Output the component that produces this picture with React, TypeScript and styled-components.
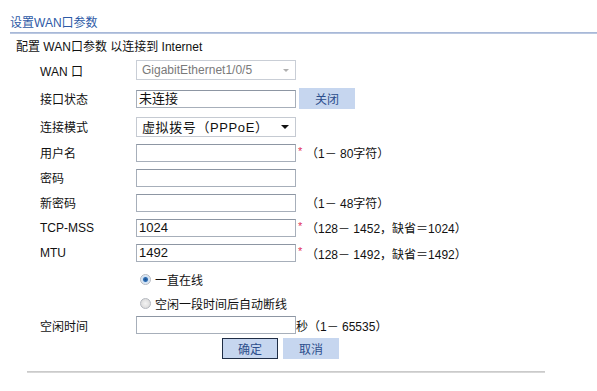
import React from "react";
import styled, { createGlobalStyle } from "styled-components";

const Global = createGlobalStyle`
  html, body { margin: 0; padding: 0; background: #fff; }
  body { font-family: "Liberation Sans", Arial, "Noto Sans CJK SC", sans-serif; font-size: 12px; color: #111; }
`;

const Page = styled.div`
  width: 597px;
  height: 391px;
  overflow: hidden;
  box-sizing: border-box;
  padding-top: 17px;
`;

const Title = styled.div`
  padding-left: 10px;
  height: 15px;
  line-height: 12px;
  color: #2d5aa6;
  font-size: 12px;
`;

const HeaderRule = styled.div`
  margin-left: 10px;
  height: 2px;
  background: linear-gradient(#9fb1d3, #c3cfe5);
`;

const Intro = styled.div`
  padding-left: 16px;
  margin-top: 5px;
  height: 16px;
  line-height: 16px;
  color: #111;
`;

const Form = styled.div`
  display: flex;
  flex-direction: column;
  margin-top: 1px;
`;

const Row = styled.div<{ $h: number }>`
  display: flex;
  align-items: center;
  height: ${(p) => p.$h}px;
  padding-left: 40px;
`;

const Label = styled.div`
  width: 96px;
  flex: none;
  color: #111;
`;

const Indent = styled.div`
  width: 96px;
  flex: none;
`;

const Input = styled.div`
  box-sizing: border-box;
  width: 160px;
  height: 18px;
  border: 1px solid #a7afba;
  border-top-color: #8d96a3;
  background: #fff;
  padding-left: 2px;
  line-height: 16px;
  font-size: 13px;
  color: #111;
  flex: none;
`;

const Select = styled.div<{ $disabled?: boolean }>`
  box-sizing: border-box;
  width: 160px;
  height: 20px;
  border: 1px solid ${(p) => (p.$disabled ? "#c9ced6" : "#c5cad2")};
  background: #fff;
  display: flex;
  align-items: center;
  justify-content: space-between;
  padding: 0 4px 0 5px;
  color: ${(p) => (p.$disabled ? "#7a7a7a" : "#111")};
  font-size: ${(p) => (p.$disabled ? "12px" : "13px")};
  letter-spacing: ${(p) => (p.$disabled ? "0" : "0.6px")};
  flex: none;
`;

const Arrow = styled.span<{ $disabled?: boolean }>`
  width: 0;
  height: 0;
  border-left: ${(p) => (p.$disabled ? 3 : 4)}px solid transparent;
  border-right: ${(p) => (p.$disabled ? 3 : 4)}px solid transparent;
  border-top: ${(p) => (p.$disabled ? 3 : 4)}px solid ${(p) => (p.$disabled ? "#b0b0b0" : "#111")};
  margin-right: 2px;
`;

const Button = styled.div<{ $focused?: boolean }>`
  box-sizing: border-box;
  width: 56px;
  height: 21px;
  background: #c6d6ef;
  border: 1px solid ${(p) => (p.$focused ? "#1f2d45" : "#c6d6ef")};
  color: #2b4d8c;
  display: flex;
  align-items: center;
  justify-content: center;
  font-size: 12px;
  flex: none;
`;

const Required = styled.span`
  color: #e0305a;
  width: 10px;
  padding-left: 2px;
  box-sizing: border-box;
  font-size: 11px;
  line-height: 10px;
  flex: none;
  align-self: center;
  margin-top: -4px;
`;

const Gap = styled.span<{ $w: number }>`
  width: ${(p) => p.$w}px;
  flex: none;
`;

const Hint = styled.span`
  color: #111;
  white-space: nowrap;
`;

const Radio = styled.span<{ $checked?: boolean }>`
  box-sizing: border-box;
  width: 11px;
  height: 11px;
  border-radius: 50%;
  border: 1px solid #b4b8bf;
  background: ${(p) =>
    p.$checked
      ? "radial-gradient(circle, #1d4f8c 0, #2f6fb5 2px, #cfe0f2 3px, #e6eef8 5px)"
      : "radial-gradient(circle, #f4f4f4 0, #dadada 5px)"};
  margin-left: 4px;
  margin-right: 4px;
  flex: none;
`;

const Actions = styled.div`
  display: flex;
  gap: 5px;
  padding-left: 222px;
  height: 24px;
  align-items: center;
`;

const FooterRule = styled.div`
  margin: 11px 52px 0 27px;
  height: 2px;
  background: linear-gradient(#c4c4c4, #dedede);
`;

export default function App() {
  return (
    <Page>
      <Global />
      <Title>设置WAN口参数</Title>
      <HeaderRule />
      <Intro>配置 WAN口参数 以连接到 Internet</Intro>
      <Form>
        <Row $h={28}>
          <Label>WAN 口</Label>
          <Select $disabled>
            <span>GigabitEthernet1/0/5</span>
            <Arrow $disabled />
          </Select>
        </Row>
        <Row $h={29}>
          <Label>接口状态</Label>
          <Input>未连接</Input>
          <Gap $w={3} />
          <Button>关闭</Button>
        </Row>
        <Row $h={27}>
          <Label>连接模式</Label>
          <Select>
            <span>虚拟拨号（PPPoE）</span>
            <Arrow />
          </Select>
        </Row>
        <Row $h={25}>
          <Label>用户名</Label>
          <Input />
          <Required>*</Required>
          <Hint>（1－ 80字符）</Hint>
        </Row>
        <Row $h={25}>
          <Label>密码</Label>
          <Input />
        </Row>
        <Row $h={25}>
          <Label>新密码</Label>
          <Input />
          <Gap $w={10} />
          <Hint>（1－ 48字符）</Hint>
        </Row>
        <Row $h={25}>
          <Label>TCP-MSS</Label>
          <Input>1024</Input>
          <Required>*</Required>
          <Hint>（128－ 1452，缺省＝1024）</Hint>
        </Row>
        <Row $h={26}>
          <Label>MTU</Label>
          <Input>1492</Input>
          <Required>*</Required>
          <Hint>（128－ 1492，缺省＝1492）</Hint>
        </Row>
        <Row $h={26}>
          <Indent />
          <Radio $checked />
          <span>一直在线</span>
        </Row>
        <Row $h={22}>
          <Indent />
          <Radio />
          <span>空闲一段时间后自动断线</span>
        </Row>
        <Row $h={22}>
          <Label>空闲时间</Label>
          <Input />
          <Hint>秒（1－ 65535）</Hint>
        </Row>
        <Actions>
          <Button $focused>确定</Button>
          <Button>取消</Button>
        </Actions>
      </Form>
      <FooterRule />
    </Page>
  );
}
